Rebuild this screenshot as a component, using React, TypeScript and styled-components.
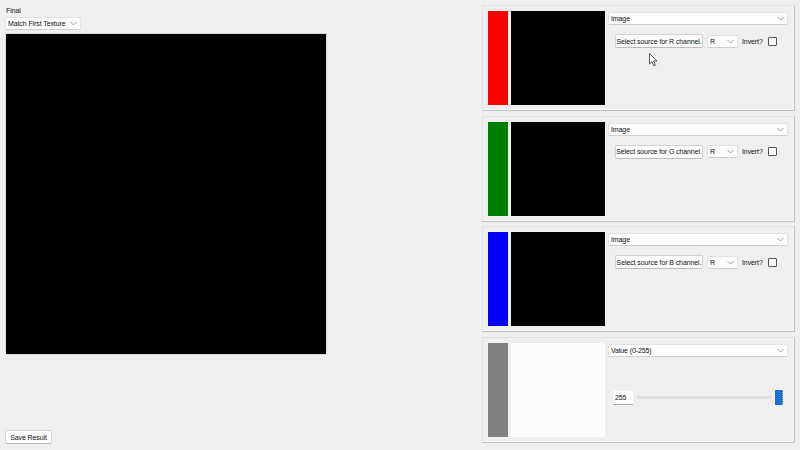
import React from "react";
import styled, { createGlobalStyle } from "styled-components";

const Global = createGlobalStyle`
  html, body { margin: 0; padding: 0; background: #f0eff0; }
  body { font-family: "Liberation Sans", Arial, sans-serif; font-size: 7px; letter-spacing: -0.1px; color: #111; }
  * { box-sizing: border-box; }
`;

const Window = styled.div`
  width: 800px;
  height: 450px;
  display: flex;
  position: relative;
  overflow: hidden;
`;

const LeftColumn = styled.div`
  width: 482px;
  display: flex;
  flex-direction: column;
  padding: 5px 0 6px 5px;
`;

const Label = styled.div`
  height: 12px;
  line-height: 11px;
  padding-left: 1px;
`;

const Combo = styled.div<{ $w?: number }>`
  width: ${(p) => (p.$w ? `${p.$w}px` : "100%")};
  height: 13px;
  background: #fdfdfd;
  border: 1px solid #e2e2e2;
  border-bottom-color: #cfcfcf;
  border-radius: 2px;
  display: flex;
  align-items: center;
  justify-content: space-between;
  padding: 0 3px 0 2px;
  line-height: 11px;
  white-space: nowrap;
`;

const Chevron = () => (
  <svg width="7" height="5" viewBox="0 0 7 5">
    <path d="M0.5 1 L3.5 4 L6.5 1" fill="none" stroke="#888" strokeWidth="0.8" />
  </svg>
);

const Canvas = styled.div`
  margin-top: 3px;
  width: 322px;
  height: 322px;
  background: #000;
  border: 1px solid #d9d9d9;
`;

const Spacer = styled.div`
  flex: 1;
`;

const Button = styled.div<{ $w: number }>`
  width: ${(p) => p.$w}px;
  height: 14px;
  background: #fdfdfd;
  border: 1px solid #d3d3d3;
  border-bottom-color: #bdbdbd;
  border-radius: 2px;
  display: flex;
  align-items: center;
  justify-content: center;
  white-space: nowrap;
`;

const RightColumn = styled.div`
  flex: 1;
  display: flex;
  flex-direction: column;
  gap: 4.5px;
  padding: 5px 5px 0 0;
`;

const Panel = styled.div`
  height: 106px;
  width: 313px;
  display: flex;
  gap: 3px;
  padding: 5px 6px 5px 5px;
  border: 1px solid #e2e1e2;
  border-right-color: #c2c1c2;
  border-bottom-color: #c2c1c2;
  box-shadow: inset -1px -1px 0 #f9f9f9;
`;

const ColorBar = styled.div<{ $c: string }>`
  width: 20px;
  height: 94px;
  background: ${(p) => p.$c};
`;

const Preview = styled.div<{ $c: string }>`
  width: 94px;
  height: 94px;
  background: ${(p) => p.$c};
`;

const Controls = styled.div`
  flex: 1;
  display: flex;
  flex-direction: column;
  padding-top: 1px;
`;

const SourceRow = styled.div`
  display: flex;
  align-items: center;
  gap: 4px;
  margin-top: 9px;
  padding-left: 7px;
`;

const Check = styled.div`
  width: 9px;
  height: 9px;
  border: 1px solid #555;
  border-radius: 1px;
  background: #fdfdfd;
  margin-left: 1px;
`;

const SliderRow = styled.div`
  flex: 1;
  display: flex;
  align-items: center;
  gap: 3px;
  padding: 2px 5px 0 5px;
`;

const ValueBox = styled.div`
  width: 20px;
  height: 14px;
  background: #fdfdfd;
  border-bottom: 1px solid #a8a8a8;
  padding-left: 2px;
  display: flex;
  align-items: center;
`;

const Track = styled.div`
  flex: 1;
  height: 3px;
  background: #e0dfe0;
  margin-left: 1px;
`;

const Thumb = styled.div`
  width: 8px;
  height: 15px;
  background: #1f6fd6;
  border-right: 1px dotted #6fe06f;
`;

const Cursor = styled.svg`
  position: absolute;
  left: 649px;
  top: 53px;
`;

const channels = [
  { color: "#ff0000", ch: "R" },
  { color: "#008000", ch: "G" },
  { color: "#0000ff", ch: "B" },
];

export default function App() {
  return (
    <Window>
      <Global />
      <LeftColumn>
        <Label>Final</Label>
        <Combo $w={76}>
          <span>Match First Texture</span>
          <Chevron />
        </Combo>
        <Canvas />
        <Spacer />
        <Button $w={47}>Save Result</Button>
      </LeftColumn>
      <RightColumn>
        {channels.map((c) => (
          <Panel key={c.ch}>
            <ColorBar $c={c.color} />
            <Preview $c="#000" />
            <Controls>
              <Combo>
                <span>Image</span>
                <Chevron />
              </Combo>
              <SourceRow>
                <Button $w={88}>Select source for {c.ch} channel.</Button>
                <Combo $w={31}>
                  <span>R</span>
                  <Chevron />
                </Combo>
                <span>Invert?</span>
                <Check />
              </SourceRow>
            </Controls>
          </Panel>
        ))}
        <Panel>
          <ColorBar $c="#808080" />
          <Preview $c="#fcfcfc" />
          <Controls>
            <Combo>
              <span>Value (0-255)</span>
              <Chevron />
            </Combo>
            <SliderRow>
              <ValueBox>255</ValueBox>
              <Track />
              <Thumb />
            </SliderRow>
          </Controls>
        </Panel>
      </RightColumn>
      <Cursor width="10" height="14" viewBox="0 0 10 14">
        <path d="M0.5 0.5 L0.5 11 L3 8.6 L4.8 12.8 L6.4 12.1 L4.7 8 L8 8 Z" fill="#fff" stroke="#333" strokeWidth="0.8" />
      </Cursor>
    </Window>
  );
}
